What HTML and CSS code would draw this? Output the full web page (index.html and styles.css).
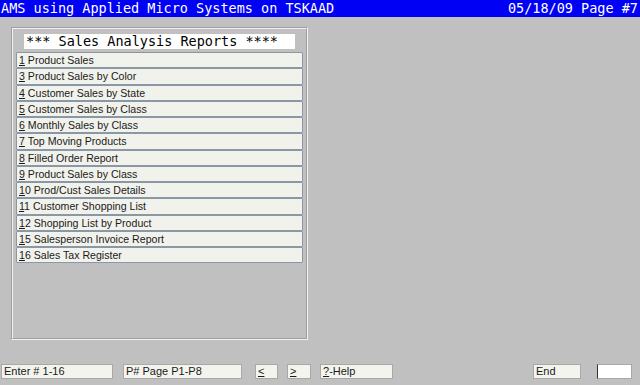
FILE: index.html
```html
<!DOCTYPE html>
<html lang="en">

<head>
  <meta charset="UTF-8" />
  <title>Sales Analysis Reports</title>
  <link rel="stylesheet" href="styles.css">
</head>

<body>
  <div class="titlebar">
    <span>AMS using Applied Micro Systems on TSKAAD</span>
    <span>05/18/09 Page #7</span>
  </div>

  <div class="panel">
    <div class="panel-title">*** Sales Analysis Reports ****</div>
    <div class="menu">
      <div class="menu-item"><u>1</u> Product Sales</div>
      <div class="menu-item"><u>3</u> Product Sales by Color</div>
      <div class="menu-item"><u>4</u> Customer Sales by State</div>
      <div class="menu-item"><u>5</u> Customer Sales by Class</div>
      <div class="menu-item"><u>6</u> Monthly Sales by Class</div>
      <div class="menu-item"><u>7</u> Top Moving Products</div>
      <div class="menu-item"><u>8</u> Filled Order Report</div>
      <div class="menu-item"><u>9</u> Product Sales by Class</div>
      <div class="menu-item"><u>1</u>0 Prod/Cust Sales Details</div>
      <div class="menu-item"><u>1</u>1 Customer Shopping List</div>
      <div class="menu-item"><u>1</u>2 Shopping List by Product</div>
      <div class="menu-item"><u>1</u>5 Salesperson Invoice Report</div>
      <div class="menu-item"><u>1</u>6 Sales Tax Register</div>
    </div>
  </div>

  <div class="footer">
    <div class="field f-enter">Enter # 1-16</div>
    <div class="field f-page">P# Page P1-P8</div>
    <div class="field f-prev"><u>&lt;</u></div>
    <div class="field f-next"><u>&gt;</u></div>
    <div class="field f-help"><u>?</u>-Help</div>
    <div class="field f-end">End</div>
    <div class="field f-input"></div>
  </div>
</body>

</html>
```

FILE: styles.css
```css
body {
  margin: 0;
  padding: 0;
  width: 640px;
  height: 385px;
  overflow: hidden;
  background-color: #c0c0c0;
  font-family: "Liberation Sans", Arial, sans-serif;
}

.titlebar {
  height: 17px;
  padding: 0 2px 0 1px;
  display: flex;
  justify-content: space-between;
  align-items: center;
  background-color: #0000f4;
  color: #ffffff;
  font-family: "DejaVu Sans Mono", monospace;
  font-size: 13.5px;
  line-height: 17px;
}

.panel {
  box-sizing: border-box;
  width: 297px;
  height: 313px;
  margin: 10px 0 0 11px;
  border: 2px groove #f2f2f2;
}

.panel-title {
  width: 271px;
  height: 15px;
  margin: 5px 0 0 11px;
  padding-left: 2px;
  box-sizing: border-box;
  background-color: #ffffff;
  color: #000000;
  font-family: "DejaVu Sans Mono", monospace;
  font-size: 13.5px;
  line-height: 15px;
  white-space: pre;
}

.menu {
  margin: 3px 0 0 3px;
  width: 287px;
}

.menu-item {
  box-sizing: border-box;
  height: 16.25px;
  padding-left: 2px;
  border: 1px solid #8a98a6;
  border-radius: 1px;
  background-color: #f2f2ec;
  color: #1a1a1a;
  font-size: 10.6px;
  line-height: 15px;
}

.footer {
  display: flex;
  margin-top: 24px;
  height: 15px;
}

.field {
  box-sizing: border-box;
  height: 15px;
  padding-left: 2px;
  border: 1px solid #a8a8a8;
  background-color: #f4f4ee;
  color: #1a1a1a;
  font-size: 11px;
  line-height: 13px;
}

.f-enter {
  width: 112px;
  margin-left: 1px;
}

.f-page {
  width: 119px;
  margin-left: 10px;
}

.f-prev {
  width: 23px;
  margin-left: 13px;
}

.f-next {
  width: 24px;
  margin-left: 9px;
}

.f-help {
  width: 73px;
  margin-left: 9px;
}

.f-end {
  width: 48px;
  margin-left: 140px;
}

.f-input {
  width: 35px;
  margin-left: 16px;
  background-color: #ffffff;
  border-left: 1px solid #333333;
}
```
